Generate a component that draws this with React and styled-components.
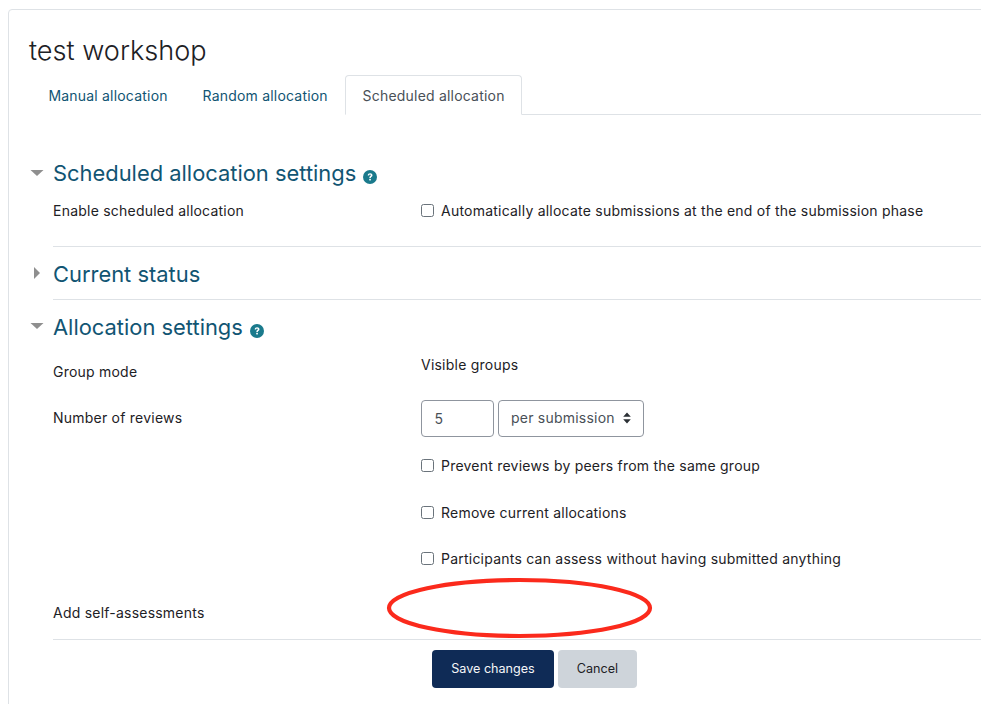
import React from "react";
import styled, { createGlobalStyle } from "styled-components";

const Global = createGlobalStyle`
  html, body { margin: 0; padding: 0; background: #fff; overflow: hidden; }
  body { font-family: Inter, "Liberation Sans", sans-serif; color: #1d2125; font-size: 14px; letter-spacing: 0.225px; }
  * { box-sizing: border-box; }
`;

const Page = styled.div`
  width: 981px;
  height: 704px;
  overflow: hidden;
  padding: 9px 0 0 8px;
`;
const Card = styled.main`
  position: relative;
  width: 1000px;
  height: 720px;
  border: 1px solid #dee2e6;
  border-radius: 4px;
  padding: 22px 0 0 20px;
`;
const Title = styled.h2`
  margin: 0;
  height: 43px;
  font-size: 27.1px;
  line-height: 37px;
  font-weight: 300;
  letter-spacing: 0;
  color: #1d2125;
`;
const Tabs = styled.nav`
  display: flex;
  height: 40px;
  margin-left: 2px;
  border-bottom: 1px solid #dee2e6;
`;
const Tab = styled.a`
  display: flex;
  align-items: center;
  height: 40px;
  padding: 0 16.4px;
  font-size: 14px;
  letter-spacing: 0.2px;
  color: ${(p) => (p.$active ? "#495057" : "#115573")};
  background: #fff;
  border: 1px solid ${(p) => (p.$active ? "#dee2e6" : "transparent")};
  border-bottom-color: ${(p) => (p.$active ? "#fff" : "transparent")};
  border-radius: 4px 4px 0 0;
`;
const Section = styled.section`
  padding-left: 24px;
`;
const SectionHead = styled.div`
  position: relative;
  display: flex;
  align-items: center;
  height: ${(p) => p.$h}px;
  padding-top: ${(p) => p.$pt || 0}px;
  padding-bottom: ${(p) => p.$pb || 0}px;
`;
const SectionTitle = styled.h3`
  margin: 0;
  font-size: 21.9px;
  line-height: 30px;
  font-weight: 400;
  letter-spacing: 0;
  color: #115573;
`;
const Caret = styled.svg`
  position: absolute;
  left: ${(p) => p.$left}px;
  top: ${(p) => p.$top}px;
`;
const Help = styled.svg`
  margin: 8px 0 0 7px;
  flex: none;
`;
const Row = styled.div`
  display: grid;
  grid-template-columns: 368px 1fr;
  height: ${(p) => p.$h}px;
  align-items: start;
`;
const Label = styled.div`
  font-size: 14px;
  line-height: 20px;
  padding-top: ${(p) => p.$pt || 0}px;
  color: #1d2125;
`;
const Value = styled.div`
  font-size: 14px;
  line-height: 20px;
  padding-top: ${(p) => p.$pt || 0}px;
  color: #1d2125;
`;
const Check = styled.label`
  display: flex;
  align-items: center;
  gap: 7px;
  font-size: 14px;
  line-height: 20px;
`;
const Box = styled.span`
  width: 13px;
  height: 13px;
  flex: none;
  margin-bottom: 2px;
  border: 1px solid #6a737b;
  border-radius: 2.5px;
  background: #fff;
`;
const Controls = styled.div`
  display: flex;
  gap: 4px;
`;
const NumberField = styled.div`
  width: 73px;
  height: 37px;
  border: 1px solid #8f959e;
  border-radius: 4px;
  padding-left: 12.5px;
  display: flex;
  align-items: center;
  color: #495057;
  font-size: 14px;
`;
const SelectField = styled.div`
  width: 146px;
  height: 37px;
  border: 1px solid #8f959e;
  border-radius: 4px;
  padding: 0 12px 2px;
  display: flex;
  align-items: center;
  justify-content: space-between;
  color: #495057;
  font-size: 14px;
`;
const Divider = styled.hr`
  margin: 0;
  border: 0;
  border-top: 1px solid #dee2e6;
`;
const Actions = styled.div`
  display: flex;
  gap: 4px;
  padding: 10px 0 0 379px;
`;
const Button = styled.button`
  height: 38px;
  width: ${(p) => p.$w}px;
  padding: 0 0 2px;
  border: 0;
  border-radius: 4px;
  font-family: inherit;
  font-size: 12.6px;
  color: ${(p) => (p.$primary ? "#f4f6f8" : "#1d2125")};
  background: ${(p) => (p.$primary ? "#0f2b56" : "#ced4da")};
`;
const Ellipse = styled.svg`
  position: absolute;
  left: 376px;
  top: 566px;
`;

const HelpIcon = () => (
  <Help width="14" height="14" viewBox="0 0 14 14">
    <circle cx="7" cy="7" r="7" fill="#1a7a8c" />
    <path
      d="M4.7 5.4C4.8 4 5.8 3.2 7.1 3.2C8.4 3.2 9.5 4 9.5 5.2C9.5 6.8 7.8 6.7 7.8 8H6.3C6.3 6.1 7.8 6.2 7.8 5.3C7.8 4.9 7.5 4.6 7 4.6C6.5 4.6 6.2 5 6.1 5.5Z"
      fill="#fff"
    />
    <rect x="6.2" y="8.8" width="1.7" height="1.7" rx="0.4" fill="#fff" />
  </Help>
);
const Updown = () => (
  <svg width="8" height="12" viewBox="0 0 8 12">
    <path d="M4 0.5L7.8 4.8H0.2ZM4 11.5L7.8 7.2H0.2Z" fill="#2b3035" />
  </svg>
);

export default function App() {
  return (
    <Page>
      <Global />
      <Card>
        <Title>test workshop</Title>
        <Tabs>
          <Tab>Manual allocation</Tab>
          <Tab>Random allocation</Tab>
          <Tab $active>Scheduled allocation</Tab>
        </Tabs>
        <Section>
          <SectionHead $h={82} $pt={33}>
            <Caret $left={-23} $top={54} width="14" height="8" viewBox="0 0 14 8">
              <path d="M0.5 1H13.5L7 7Z" fill="#8f8f8f" />
            </Caret>
            <SectionTitle>Scheduled allocation settings</SectionTitle>
            <HelpIcon />
          </SectionHead>
          <Row $h={49}>
            <Label $pt={4}>Enable scheduled allocation</Label>
            <Value $pt={4}>
              <Check>
                <Box />
                Automatically allocate submissions at the end of the submission phase
              </Check>
            </Value>
          </Row>
        </Section>
        <Section>
          <Divider />
          <SectionHead $h={52} $pt={2}>
            <Caret $left={-20} $top={19} width="8" height="14" viewBox="0 0 8 14">
              <path d="M1 1V13L7 7Z" fill="#8f8f8f" />
            </Caret>
            <SectionTitle>Current status</SectionTitle>
          </SectionHead>
          <Divider />
          <SectionHead $h={54} $pb={1}>
            <Caret $left={-23} $top={22} width="14" height="8" viewBox="0 0 14 8">
              <path d="M0.5 1H13.5L7 7Z" fill="#8f8f8f" />
            </Caret>
            <SectionTitle>Allocation settings</SectionTitle>
            <HelpIcon />
          </SectionHead>
          <Row $h={46}>
            <Label $pt={8}>Group mode</Label>
            <Value $pt={1}>Visible groups</Value>
          </Row>
          <Row $h={48}>
            <Label $pt={8}>Number of reviews</Label>
            <Controls>
              <NumberField>5</NumberField>
              <SelectField>
                per submission
                <Updown />
              </SelectField>
            </Controls>
          </Row>
          <Row $h={46}>
            <span />
            <Value $pt={8}>
              <Check>
                <Box />
                Prevent reviews by peers from the same group
              </Check>
            </Value>
          </Row>
          <Row $h={46}>
            <span />
            <Value $pt={9}>
              <Check>
                <Box />
                Remove current allocations
              </Check>
            </Value>
          </Row>
          <Row $h={47}>
            <span />
            <Value $pt={9}>
              <Check>
                <Box />
                Participants can assess without having submitted anything
              </Check>
            </Value>
          </Row>
          <Row $h={52}>
            <Label $pt={16}>Add self-assessments</Label>
            <span />
          </Row>
          <Divider />
          <Actions>
            <Button $primary $w={122}>Save changes</Button>
            <Button $w={79}>Cancel</Button>
          </Actions>
        </Section>
        <Ellipse width="270" height="68" viewBox="0 0 270 68">
          <ellipse cx="134.5" cy="32" rx="130.5" ry="28" fill="none" stroke="#fb2a1c" strokeWidth="4.2" />
        </Ellipse>
      </Card>
    </Page>
  );
}
